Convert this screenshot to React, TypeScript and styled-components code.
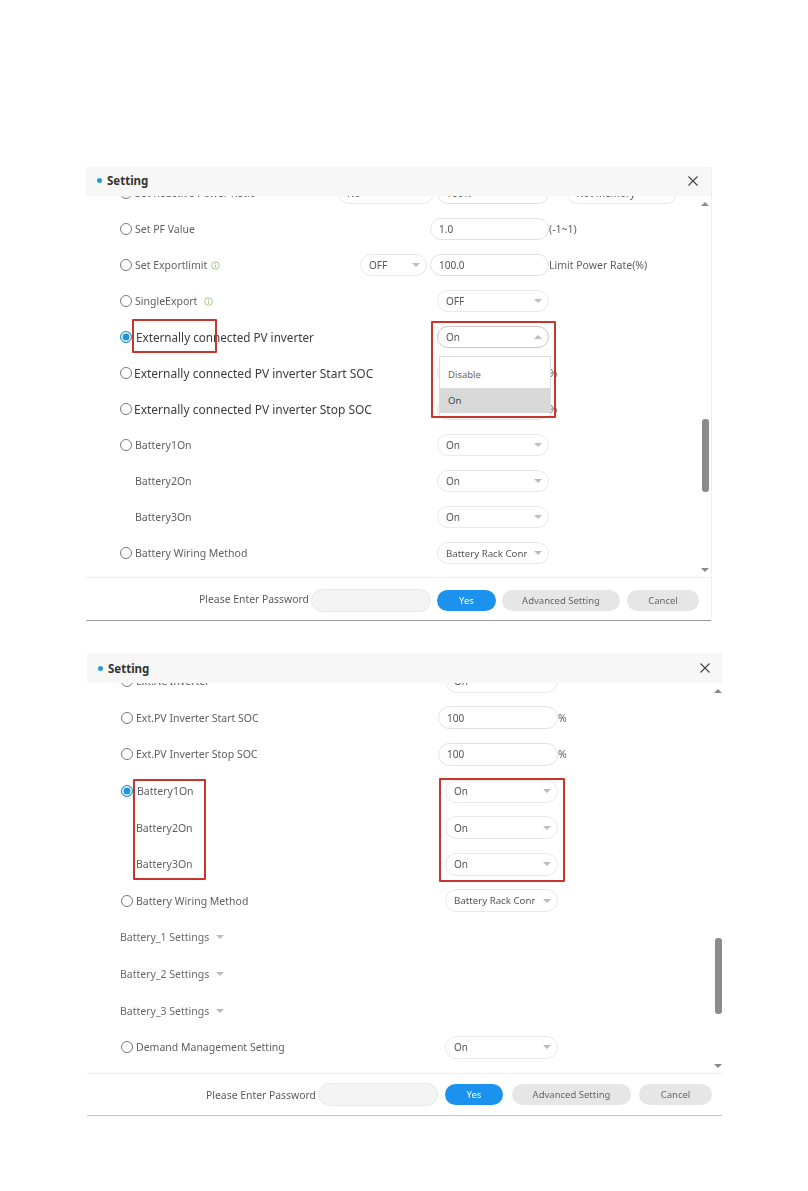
import React from "react";
import styled, { createGlobalStyle } from "styled-components";

const GlobalStyle = createGlobalStyle`
    html, body { margin: 0; padding: 0; background: #fff; }
    body { font-family: "Noto Sans", "Liberation Sans", sans-serif; color: #5c5c5c; }
`;

const Page = styled.div`
    width: 808px;
    height: 1191px;
    padding-top: 167px;
    box-sizing: border-box;
    overflow: hidden;
    filter: blur(0.35px);
`;

const Panel = styled.section<{ $second?: boolean }>`
    --row: ${p => (p.$second ? "36.6px" : "36px")};
    --lead: ${p => (p.$second ? "317px" : "310px")};
    --slot: ${p => (p.$second ? "120px" : "119px")};
    --ctl: ${p => (p.$second ? "23px" : "22px")};
    --sel: ${p => (p.$second ? "113px" : "112px")};
    position: relative;
    width: ${p => (p.$second ? "635px" : "625px")};
    height: ${p => (p.$second ? "463px" : "454px")};
    margin-left: ${p => (p.$second ? "87px" : "86px")};
    margin-top: ${p => (p.$second ? "32px" : "0")};
    display: flex;
    flex-direction: column;
    box-shadow: ${p => (p.$second ? "none" : "1px 0 0 #efefef")};
    border-bottom: 1px solid ${p => (p.$second ? "#c4c4c4" : "#9d9d9d")};
    box-sizing: border-box;
`;

const Header = styled.header<{ $second?: boolean }>`
    height: ${p => (p.$second ? "30px" : "29px")};
    flex: none;
    display: flex;
    align-items: center;
    padding: 0 ${p => (p.$second ? "12px" : "13px")} ${p => (p.$second ? "0" : "2px")} 11px;
    background: #f7f7f7;
    box-sizing: border-box;
`;

const Dot = styled.span`
    width: 5px;
    height: 5px;
    border-radius: 50%;
    background: #2a98d8;
    margin-right: 5px;
`;

const Title = styled.h2`
    flex: 1;
    margin: 0;
    font-size: 11.5px;
    font-weight: 700;
    color: #333;
`;

const Body = styled.div`
    flex: 1;
    min-height: 0;
    display: flex;
    overflow: hidden;
`;

const Rows = styled.div<{ $second?: boolean }>`
    flex: 1;
    padding-left: 34px;
    margin-top: ${p => (p.$second ? "-20px" : "-21px")};
`;

const Row = styled.div`
    height: var(--row);
    display: flex;
    align-items: center;
    font-size: 10.5px;
`;

const Lead = styled.div`
    width: var(--lead);
    flex: none;
    display: flex;
    align-items: center;
    min-width: 0;
`;

const Radio = styled.span<{ $on?: boolean }>`
    width: 12px;
    height: 12px;
    flex: none;
    box-sizing: border-box;
    border-radius: 50%;
    border: 1px solid ${p => (p.$on ? "#2394dc" : "#777")};
    background: ${p => (p.$on ? "#2394dc" : "#fff")};
    box-shadow: ${p => (p.$on ? "inset 0 0 0 1.5px #fff" : "none")};
    margin-right: ${p => (p.$on ? "4px" : "3px")};
`;

const Label = styled.span<{ $strong?: boolean; $wide?: boolean; $indent?: boolean }>`
    white-space: nowrap;
    font-size: ${p => (p.$wide ? "12px" : p.$strong ? "11.7px" : "10.5px")};
    color: ${p => (p.$strong || p.$wide ? "#3c3c3c" : "#5f5f5f")};
    margin-left: ${p => (p.$indent ? "15px" : p.$wide ? "-1px" : "0")};
`;

const Slot = styled.div`
    width: var(--slot);
    flex: none;
    display: flex;
    justify-content: flex-end;
`;

const Field = styled.div<{ $narrow?: boolean }>`
    height: var(--ctl);
    width: ${p => (p.$narrow ? "var(--sel)" : "100%")};
    box-sizing: border-box;
    border: 1px solid #e2e2e2;
    border-radius: 12px;
    padding: 0 8px;
    display: flex;
    align-items: center;
    background: #fff;
    color: #555;
    font-size: 10px;
`;

const Select = styled.div<{ $w?: number; $open?: boolean }>`
    width: ${p => (p.$w ? `${p.$w}px` : "var(--sel)")};
    height: var(--ctl);
    flex: none;
    box-sizing: border-box;
    border: 1px solid ${p => (p.$open ? "#c6c6c6" : "#e8e8e8")};
    border-radius: 12px;
    padding: 0 6px 0 8px;
    display: flex;
    align-items: center;
    justify-content: space-between;
    background: #fff;
    color: #555;
    font-size: 10px;
    white-space: nowrap;
    overflow: hidden;
`;

const Caret = styled.i<{ $up?: boolean; $color?: string }>`
    width: 0;
    height: 0;
    flex: none;
    border-left: 4.5px solid transparent;
    border-right: 4.5px solid transparent;
    ${p =>
        p.$up
            ? `border-bottom: 4px solid ${p.$color ?? "#bcbcbc"};`
            : `border-top: 4px solid ${p.$color ?? "#bcbcbc"};`}
`;

const Suffix = styled.span<{ $gap?: number }>`
    white-space: nowrap;
    font-size: 10.5px;
    color: #5f5f5f;
    margin-left: ${p => p.$gap ?? 0}px;
`;

const Clip = styled.span`
    display: block;
    width: 81px;
    overflow: hidden;
    font-size: 9.7px;
`;

const Trailing = styled.div<{ $gap: number }>`
    margin-left: auto;
    margin-right: ${p => p.$gap}px;
`;

const GroupTitle = styled.span`
    white-space: nowrap;
    margin-left: -1px;
    margin-right: 7px;
    color: #6a6a6a;
    font-size: 10.5px;
`;

const Scrollbar = styled.div<{ $second?: boolean }>`
    width: 8px;
    margin-right: ${p => (p.$second ? "0" : "2px")};
    flex: none;
    display: flex;
    flex-direction: column;
    align-items: center;
    padding: ${p => (p.$second ? "6px 0 5px" : "6px 0 5px")};
    box-sizing: border-box;
`;

const Thumb = styled.div<{ $h: number; $top: number }>`
    width: 7px;
    height: ${p => p.$h}px;
    margin-top: ${p => p.$top}px;
    border-radius: 3px;
    background: #8c8c8c;
`;

const Spacer = styled.span`
    flex: 1;
`;

const Footer = styled.footer<{ $second?: boolean }>`
    height: ${p => (p.$second ? "42px" : "43px")};
    flex: none;
    display: flex;
    align-items: center;
    justify-content: flex-end;
    border-top: 1px solid #eee;
    box-sizing: border-box;
    padding-top: ${p => (p.$second ? "0" : "2px")};
    padding-right: ${p => (p.$second ? "10px" : "12px")};
`;

const Prompt = styled.span<{ $second?: boolean }>`
    font-size: 10.4px;
    color: #5a5a5a;
    white-space: nowrap;
    margin-right: 2px;
    margin-top: ${p => (p.$second ? "0" : "-2px")};
`;

const Password = styled.div<{ $second?: boolean }>`
    width: 120px;
    height: 23px;
    box-sizing: border-box;
    background: #f4f4f4;
    border: 1px solid #e8e8e8;
    border-radius: 12px;
    margin-right: ${p => (p.$second ? "7px" : "6px")};
`;

const Button = styled.button<{ $primary?: boolean; $w: number; $gap: number }>`
    width: ${p => p.$w}px;
    height: 21px;
    padding: 0;
    border: 0;
    border-radius: 11px;
    margin-right: ${p => p.$gap}px;
    background: ${p => (p.$primary ? "#1a92ee" : "#e6e6e6")};
    color: ${p => (p.$primary ? "#fff" : "#666")};
    font-family: inherit;
    font-size: 9.5px;
`;

// red annotation boxes lie over the screenshot content
const Mark = styled.div<{ $x: number; $y: number; $w: number; $h: number }>`
    position: absolute;
    left: ${p => p.$x}px;
    top: ${p => p.$y}px;
    width: ${p => p.$w}px;
    height: ${p => p.$h}px;
    box-sizing: border-box;
    border: 2px solid #c8352b;
    border-radius: 1px;
    pointer-events: none;
`;

const Menu = styled.div`
    position: absolute;
    left: 353px;
    top: 189px;
    width: 112px;
    height: 62px;
    box-sizing: border-box;
    background: #fff;
    border: 1px solid #dcdcdc;
    border-bottom: 0;
    padding-top: 5px;
    font-size: 9.5px;
    color: #666;
`;

const MenuItem = styled.div<{ $active?: boolean }>`
    height: 25px;
    line-height: 25px;
    padding-left: 8px;
    background: ${p => (p.$active ? "#d9d9d9" : "#fff")};
    color: ${p => (p.$active ? "#444" : "#666")};
    margin-top: ${p => (p.$active ? "1px" : "0")};
`;

const Close = () => (
    <svg width="10" height="10" viewBox="0 0 10 10" fill="none" stroke="#444" strokeWidth="1.1">
        <path d="M0.5 0.5 9.5 9.5M9.5 0.5 0.5 9.5" />
    </svg>
);

const InfoIcon = styled.svg<{ $gap: number }>`
    flex: none;
    margin-left: ${p => p.$gap}px;
`;

const Info = ({ gap }: { gap: number }) => (
    <InfoIcon $gap={gap} width="9" height="9" viewBox="0 0 9 9" fill="none" stroke="#a9c987">
        <circle cx="4.5" cy="4.5" r="3.8" />
        <path d="M4.5 3.8V6.8M4.5 2V3" />
    </InfoIcon>
);

const Chosen = ({ text, open }: { text: string; open?: boolean }) => (
    <Slot>
        <Select $open={open}>
            {text}
            <Caret $up={open} />
        </Select>
    </Slot>
);

const WiringSelect = () => (
    <Slot>
        <Select>
            <Clip>Battery Rack Conn</Clip>
            <Caret />
        </Select>
    </Slot>
);

const Value = ({ text, narrow }: { text: string; narrow?: boolean }) => (
    <Slot>
        <Field $narrow={narrow}>{text}</Field>
    </Slot>
);

const Bar = ({ top, h, second }: { top: number; h: number; second?: boolean }) => (
    <Scrollbar $second={second}>
        <Caret $up $color="#8a8a8a" />
        <Thumb $top={top} $h={h} />
        <Spacer />
        <Caret $color="#8a8a8a" />
    </Scrollbar>
);

const Actions = ({ second }: { second?: boolean }) => (
    <Footer $second={second}>
        <Prompt $second={second}>Please Enter Password</Prompt>
        <Password $second={second} />
        <Button $primary $w={second ? 58 : 59} $gap={second ? 9 : 6}>Yes</Button>
        <Button $w={second ? 119 : 118} $gap={second ? 8 : 7}>Advanced Setting</Button>
        <Button $w={second ? 73 : 72} $gap={0}>Cancel</Button>
    </Footer>
);

export default function App() {
    return (
        <Page>
            <GlobalStyle />

            <Panel>
                <Header>
                    <Dot />
                    <Title>Setting</Title>
                    <Close />
                </Header>
                <Body>
                    <Rows>
                        <Row>
                            <Lead>
                                <Radio />
                                <Label>Set Reactive Power Ratio</Label>
                                <Trailing $gap={-4}>
                                    <Select $w={96}>No</Select>
                                </Trailing>
                            </Lead>
                            <Value text="100%" narrow />
                            <Suffix $gap={18}>
                                <Select $w={110}>Not Memory</Select>
                            </Suffix>
                        </Row>
                        <Row>
                            <Lead>
                                <Radio />
                                <Label>Set PF Value</Label>
                            </Lead>
                            <Value text="1.0" />
                            <Suffix>(-1~1)</Suffix>
                        </Row>
                        <Row>
                            <Lead>
                                <Radio />
                                <Label>Set Exportlimit</Label>
                                <Info gap={4} />
                                <Trailing $gap={3}>
                                    <Select $w={67}>
                                        OFF
                                        <Caret />
                                    </Select>
                                </Trailing>
                            </Lead>
                            <Value text="100.0" />
                            <Suffix>Limit Power Rate(%)</Suffix>
                        </Row>
                        <Row>
                            <Lead>
                                <Radio />
                                <Label>SingleExport</Label>
                                <Info gap={7} />
                            </Lead>
                            <Chosen text="OFF" />
                        </Row>
                        <Row>
                            <Lead>
                                <Radio $on />
                                <Label $strong>Externally connected PV inverter</Label>
                            </Lead>
                            <Chosen text="On" open />
                        </Row>
                        <Row>
                            <Lead>
                                <Radio />
                                <Label $wide>Externally connected PV inverter Start SOC</Label>
                            </Lead>
                            <Value text="100" narrow />
                            <Suffix>%</Suffix>
                        </Row>
                        <Row>
                            <Lead>
                                <Radio />
                                <Label $wide>Externally connected PV inverter Stop SOC</Label>
                            </Lead>
                            <Value text="100" narrow />
                            <Suffix>%</Suffix>
                        </Row>
                        <Row>
                            <Lead>
                                <Radio />
                                <Label>Battery1On</Label>
                            </Lead>
                            <Chosen text="On" />
                        </Row>
                        <Row>
                            <Lead>
                                <Label $indent>Battery2On</Label>
                            </Lead>
                            <Chosen text="On" />
                        </Row>
                        <Row>
                            <Lead>
                                <Label $indent>Battery3On</Label>
                            </Lead>
                            <Chosen text="On" />
                        </Row>
                        <Row>
                            <Lead>
                                <Radio />
                                <Label>Battery Wiring Method</Label>
                            </Lead>
                            <WiringSelect />
                        </Row>
                    </Rows>
                    <Bar top={213} h={73} />
                </Body>
                <Actions />
                <Menu>
                    <MenuItem>Disable</MenuItem>
                    <MenuItem $active>On</MenuItem>
                </Menu>
                <Mark $x={46} $y={152} $w={85} $h={34} />
                <Mark $x={345} $y={154} $w={125} $h={97} />
            </Panel>

            <Panel $second>
                <Header $second>
                    <Dot />
                    <Title>Setting</Title>
                    <Close />
                </Header>
                <Body>
                    <Rows $second>
                        <Row>
                            <Lead>
                                <Radio />
                                <Label>Ext.AC Inverter</Label>
                            </Lead>
                            <Chosen text="On" />
                        </Row>
                        <Row>
                            <Lead>
                                <Radio />
                                <Label>Ext.PV Inverter Start SOC</Label>
                            </Lead>
                            <Value text="100" />
                            <Suffix>%</Suffix>
                        </Row>
                        <Row>
                            <Lead>
                                <Radio />
                                <Label>Ext.PV Inverter Stop SOC</Label>
                            </Lead>
                            <Value text="100" />
                            <Suffix>%</Suffix>
                        </Row>
                        <Row>
                            <Lead>
                                <Radio $on />
                                <Label>Battery1On</Label>
                            </Lead>
                            <Chosen text="On" />
                        </Row>
                        <Row>
                            <Lead>
                                <Label $indent>Battery2On</Label>
                            </Lead>
                            <Chosen text="On" />
                        </Row>
                        <Row>
                            <Lead>
                                <Label $indent>Battery3On</Label>
                            </Lead>
                            <Chosen text="On" />
                        </Row>
                        <Row>
                            <Lead>
                                <Radio />
                                <Label>Battery Wiring Method</Label>
                            </Lead>
                            <WiringSelect />
                        </Row>
                        <Row>
                            <GroupTitle>Battery_1 Settings</GroupTitle>
                            <Caret />
                        </Row>
                        <Row>
                            <GroupTitle>Battery_2 Settings</GroupTitle>
                            <Caret />
                        </Row>
                        <Row>
                            <GroupTitle>Battery_3 Settings</GroupTitle>
                            <Caret />
                        </Row>
                        <Row>
                            <Lead>
                                <Radio />
                                <Label>Demand Management Setting</Label>
                            </Lead>
                            <Chosen text="On" />
                        </Row>
                    </Rows>
                    <Bar second top={245} h={76} />
                </Body>
                <Actions second />
                <Mark $x={46} $y={126} $w={73} $h={101} />
                <Mark $x={352} $y={125} $w={126} $h={104} />
            </Panel>
        </Page>
    );
}
